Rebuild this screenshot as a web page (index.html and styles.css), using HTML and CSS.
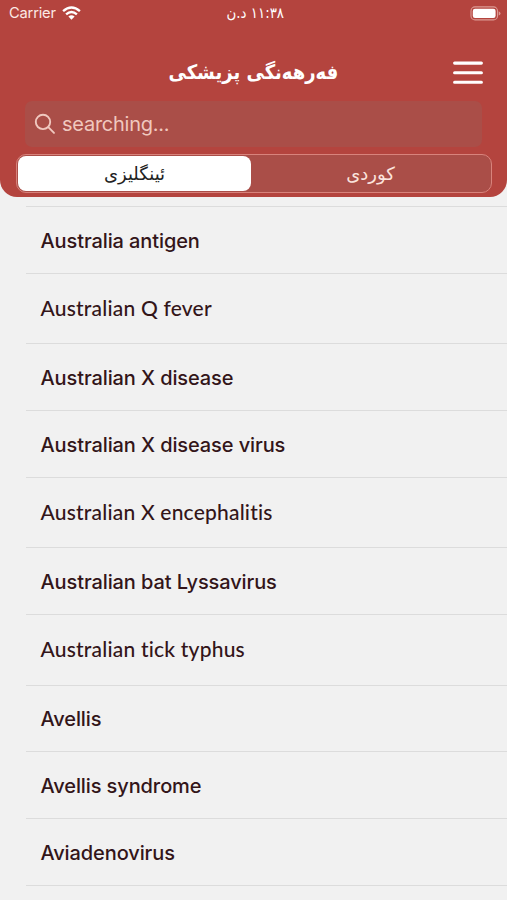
FILE: index.html
```html
<!DOCTYPE html>
<html lang="ckb">
<head>
<meta charset="utf-8">
<title>فەرهەنگی پزیشکی</title>
<link rel="stylesheet" href="styles.css">
</head>
<body>
<header class="header">
  <div class="status">
    <div class="carrier"><span>Carrier</span>
      <svg class="wifi" width="19" height="14" viewBox="0 0 19 14"><g fill="none" stroke="#fff" stroke-width="2.4"><path d="M1.1 5.1Q9.5-2.3 17.9 5.1"/><path d="M4.1 8.4Q9.5 3.6 14.9 8.4"/></g><path fill="#fff" d="M6.4 10.4Q9.5 7.9 12.6 10.4L9.5 13.7Z"/></svg>
    </div>
    <div class="time" dir="rtl"><span>١١:٣٨ د.ن</span></div>
    <svg class="battery" width="31" height="15" viewBox="0 0 31 15"><rect x="1" y=".9" width="26.5" height="13" rx="4" fill="none" stroke="#dc9a94" stroke-width="1.1"/><rect x="2.8" y="2.8" width="22.8" height="9.2" rx="2.2" fill="#fff"/><path d="M28.7 5.2Q30.5 6 30.5 7.4T28.7 9.6Z" fill="#dc9a94"/></svg>
  </div>
  <div class="navbar">
    <h1 class="title" dir="rtl"><span>فەرهەنگی پزیشکی</span></h1>
    <svg class="menu" width="30" height="24" viewBox="0 0 30 24"><path d="M1.6 2.1H28.4M1.6 11.7H28.4M1.6 21.2H28.4" stroke="#fff" stroke-width="3.1" stroke-linecap="round"/></svg>
  </div>
  <div class="search">
    <svg width="22" height="22" viewBox="0 0 22 22"><g fill="none" stroke="#f0c8bf" stroke-width="1.9" stroke-linecap="round"><circle cx="9" cy="8.9" r="7.2"/><path d="M14.3 14.2L20 19.9"/></g></svg>
    <span>searching...</span>
  </div>
  <div class="segments">
    <div class="segment active" dir="rtl"><span>ئینگلیزی</span></div>
    <div class="segment" dir="rtl"><span>کوردی</span></div>
  </div>
</header>
<main class="list" lang="en">
  <div class="row"><span>Australia antigen</span></div>
  <div class="row alt"><span>Australian Q fever</span></div>
  <div class="row"><span>Australian X disease</span></div>
  <div class="row tall"><span>Australian X disease virus</span></div>
  <div class="row alt"><span>Australian X encephalitis</span></div>
  <div class="row"><span>Australian bat Lyssavirus</span></div>
  <div class="row alt"><span>Australian tick typhus</span></div>
  <div class="row"><span>Avellis</span></div>
  <div class="row tall"><span>Avellis syndrome</span></div>
  <div class="row tall"><span>Aviadenovirus</span></div>
</main>
</body>
</html>
```
FILE: styles.css
```css
* { box-sizing: border-box; }
body { margin: 0; height: 900px; overflow: hidden; background: #f1f1f1; font-family: Inter, "Liberation Sans", sans-serif; }
.header { height: 197px; background: #b4443e; border-radius: 0 0 17px 17px; color: #fff; display: flex; flex-direction: column; }
.status { height: 28px; display: grid; grid-template-columns: 1fr auto 1fr; align-items: center; padding: 0 6px 2px 9px; }
.carrier { display: flex; align-items: center; gap: 6px; font-size: 14.7px; letter-spacing: -.2px; color: #fce9e5; }
.wifi { margin-top: -1px; }
.time { font: 15px "DejaVu Sans", sans-serif; }
.time span { display: inline-block; transform: scaleX(.89); }
.battery { justify-self: end; }
.navbar { height: 73px; display: grid; grid-template-columns: 1fr auto 1fr; align-items: center; padding: 16px 24px 0; }
.title { grid-column: 2; margin: 0; font: bold 20px "DejaVu Sans", sans-serif; white-space: nowrap; }
.title span { display: inline-block; transform: translateY(-1px) scaleX(.9); }
.menu { justify-self: end; }
.search { height: 46px; margin: 0 25px; border-radius: 7px; background: #aa4e48; display: flex; align-items: center; gap: 6px; padding: 0 9px 1px; color: #f0c8bf; font-size: 20px; letter-spacing: -.25px; }
.segments { height: 39px; margin: 7px 15px 0 16px; border: 1.5px solid #d8837c; border-radius: 10px; background: #aa4e48; display: grid; grid-template-columns: 233px 1fr; padding: 1px; }
.segment { display: flex; justify-content: center; align-items: center; color: #fbe3dd; font: 18px "DejaVu Sans", sans-serif; }
.segment.active { background: #fff; border-radius: 8px; color: #222; }
.list { margin: 9px 0 0 26px; border-top: 1px solid #dcdcdc; color: #331519; }
.row { height: 66.5px; border-bottom: 1px solid #dcdcdc; padding: 2px 0 0 14.5px; display: flex; align-items: center; font-size: 20px; font-weight: 450; letter-spacing: -.1px; }
.row.tall { height: 67px; }
.row.alt { height: 70.7px; padding-top: 0; padding-bottom: 2px; font-family: Lato, sans-serif; font-size: 21px; font-weight: 500; letter-spacing: .2px; }
```
